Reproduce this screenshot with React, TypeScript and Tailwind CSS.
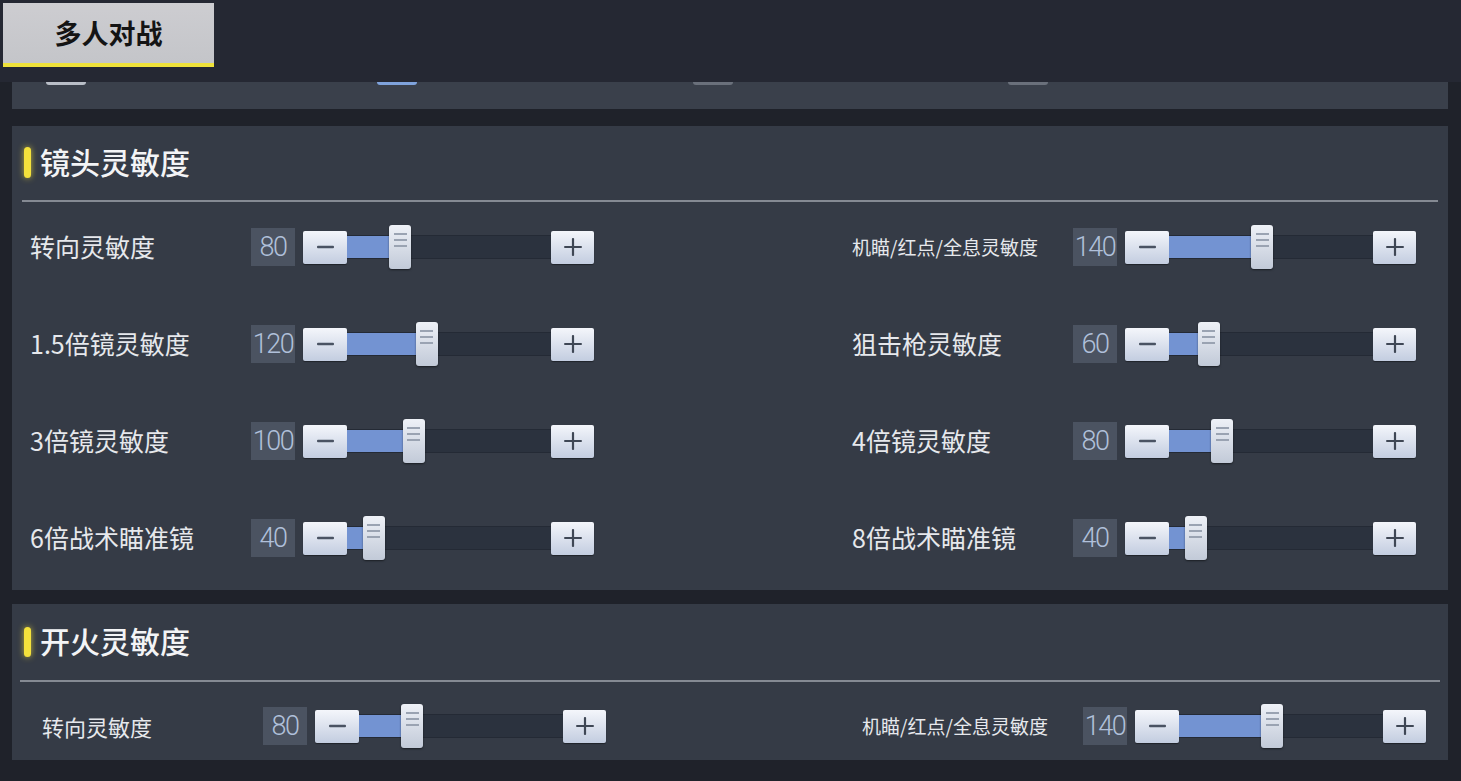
import React from 'react'

const FONT = { fontFamily: '"Noto Sans CJK SC", "Noto Sans", sans-serif' }

type Item = { label: string; value: number; small?: boolean }

const lensRows: Item[][] = [
  [
    { label: '转向灵敏度', value: 80 },
    { label: '机瞄/红点/全息灵敏度', value: 140, small: true },
  ],
  [
    { label: '1.5倍镜灵敏度', value: 120 },
    { label: '狙击枪灵敏度', value: 60 },
  ],
  [
    { label: '3倍镜灵敏度', value: 100 },
    { label: '4倍镜灵敏度', value: 80 },
  ],
  [
    { label: '6倍战术瞄准镜', value: 40 },
    { label: '8倍战术瞄准镜', value: 40 },
  ],
]

function MinusBtn() {
  return (
    <button className="w-[44px] h-[33px] rounded-[2px] bg-gradient-to-b from-[#f4f6fb] to-[#c3cde0] flex items-center justify-center shadow-[0_1px_1px_rgba(0,0,0,0.4)]">
      <svg width="17" height="4" viewBox="0 0 17 4">
        <rect x="0" y="0.75" width="17" height="2.5" rx="1" fill="#4a5363" />
      </svg>
    </button>
  )
}

function PlusBtn() {
  return (
    <button className="w-[43px] h-[33px] rounded-[2px] bg-gradient-to-b from-[#f4f6fb] to-[#c3cde0] flex items-center justify-center shadow-[0_1px_1px_rgba(0,0,0,0.4)]">
      <svg width="18" height="18" viewBox="0 0 18 18">
        <rect x="0" y="7.9" width="18" height="2.2" rx="1" fill="#3f4755" />
        <rect x="7.9" y="0" width="2.2" height="18" rx="1" fill="#3f4755" />
      </svg>
    </button>
  )
}

function Slider({ value }: { value: number }) {
  const center = value * 0.665
  return (
    <div className="relative w-[204px] h-[44px] flex items-center">
      <div className="w-full h-[24px] bg-[#2b323e] border-y border-[#242a35] relative">
        <div className="h-full bg-[#7393d2]" style={{ width: center }} />
      </div>
      <div
        className="absolute top-0 w-[22px] h-[44px] rounded-[3px] bg-gradient-to-b from-[#eef1f7] to-[#c2cad8] shadow-[0_1px_2px_rgba(0,0,0,0.5)] flex flex-col items-center pt-[8px] gap-[4px]"
        style={{ left: center - 11 }}
      >
        <div className="w-[13px] h-[2px] bg-[#9aa3b2]" />
        <div className="w-[13px] h-[2px] bg-[#9aa3b2]" />
        <div className="w-[13px] h-[2px] bg-[#9aa3b2]" />
      </div>
    </div>
  )
}

function Control({ item, labelSize }: { item: Item; labelSize: string }) {
  return (
    <div className="flex items-center h-[44px]">
      <div className={`w-[221px] text-[#e6e8ec] ${item.small ? 'text-[19px]' : labelSize}`}>{item.label}</div>
      <div
        className="w-[44px] h-[38px] bg-[#4b5361] flex items-center justify-center text-[27px] font-light text-[#b0c0da] tracking-[-1.5px] whitespace-nowrap"
        style={{ fontFamily: 'Roboto, "Liberation Sans", sans-serif' }}
      >
        {item.value}
      </div>
      <div className="w-[8px]" />
      <MinusBtn />
      <Slider value={item.value} />
      <PlusBtn />
    </div>
  )
}

function Header({ title, h }: { title: string; h: string }) {
  return (
    <div className={`flex items-center ml-[12px] ${h}`}>
      <div className={`w-[7px] ${h} rounded-full bg-[#f4e13c] shadow-[0_0_6px_rgba(244,225,60,0.7)]`} />
      <div className="ml-[9px] pb-[4px] text-[30px] text-[#f3f4f6] font-medium leading-none">{title}</div>
    </div>
  )
}

export default function App() {
  return (
    <div className="w-[1461px] h-[781px] bg-[#1f222a] flex flex-col overflow-hidden" style={FONT}>
      <div className="h-[82px] bg-[#252833] pt-[3px] pl-[3px] shrink-0">
        <div className="w-[211px] h-[64px] bg-gradient-to-b from-[#cdcdd1] to-[#c4c5c9] border-b-4 border-[#efe23a] flex items-center justify-center text-[27px] font-bold text-[#141414]">
          多人对战
        </div>
      </div>

      <div className="ml-[12px] w-[1436px] h-[27px] bg-[#3a404b] flex items-start shrink-0">
        <div className="ml-[34px] w-[40px] h-[3px] rounded-b bg-[#b9bec7]" />
        <div className="ml-[291px] w-[40px] h-[3px] rounded-b bg-[#7fa3dc]" />
        <div className="ml-[276px] w-[40px] h-[3px] rounded-b bg-[#6a707b]" />
        <div className="ml-[275px] w-[40px] h-[3px] rounded-b bg-[#6a707b]" />
      </div>

      <section className="mt-[17px] ml-[12px] w-[1436px] bg-[#353b46] pt-[21px] pb-[30px] shrink-0">
        <Header title="镜头灵敏度" h="h-[31px]" />
        <div className="mt-[22px] mx-[10px] h-[2px] bg-[#858a93]" />
        <div className="pt-[23px] pl-[18px] flex flex-col gap-[53px]">
          {lensRows.map((row, i) => (
            <div key={i} className="grid grid-cols-[822px_1fr]">
              {row.map((item) => (
                <Control key={item.label} item={item} labelSize="text-[25px]" />
              ))}
            </div>
          ))}
        </div>
      </section>

      <section className="mt-[14px] ml-[12px] w-[1436px] bg-[#353b46] pt-[23px] pb-[12px] shrink-0">
        <Header title="开火灵敏度" h="h-[30px]" />
        <div className="mt-[23px] mx-[8px] h-[2px] bg-[#858a93]" />
        <div className="pt-[22px] pl-[30px] grid grid-cols-[820px_1fr]">
          <Control item={{ label: '转向灵敏度', value: 80 }} labelSize="text-[22px]" />
          <Control item={{ label: '机瞄/红点/全息灵敏度', value: 140, small: true }} labelSize="text-[22px]" />
        </div>
      </section>
    </div>
  )
}
